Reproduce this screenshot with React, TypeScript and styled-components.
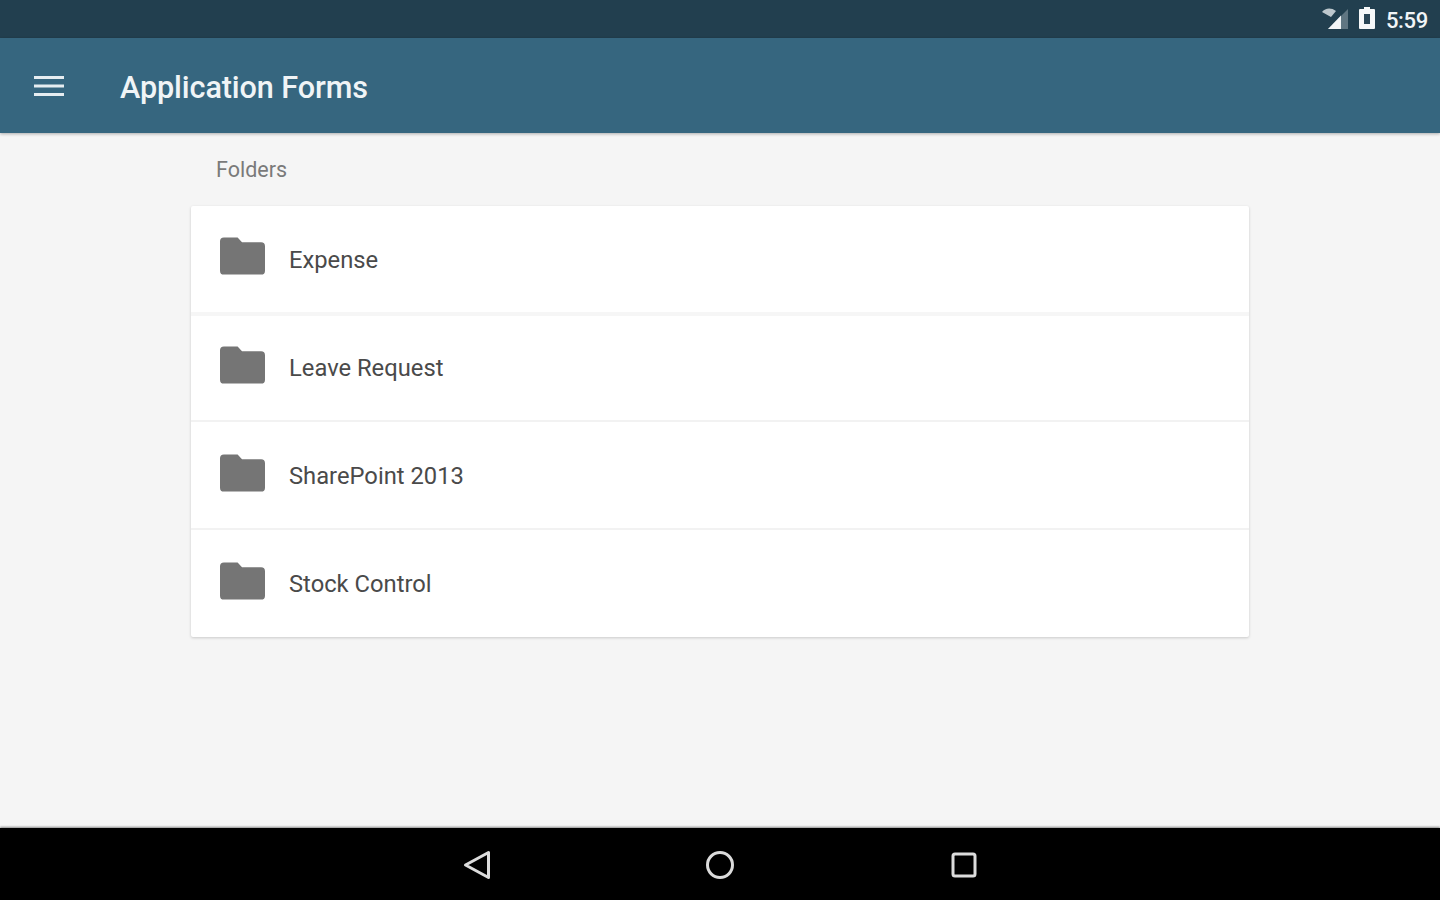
import React from "react";
import styled, { createGlobalStyle } from "styled-components";

const GlobalStyle = createGlobalStyle`
  html, body {
    margin: 0;
    padding: 0;
    height: 100%;
    background: #f5f5f5;
    font-family: Roboto, "Liberation Sans", sans-serif;
  }
`;

const Screen = styled.div`
  width: 1440px;
  height: 900px;
  display: flex;
  flex-direction: column;
  overflow: hidden;
`;

const StatusBar = styled.div`
  height: 38px;
  flex: none;
  background: #223f4f;
  display: flex;
  align-items: center;
  justify-content: flex-end;
  padding-right: 12px;
  box-sizing: border-box;
  color: #f2f5f7;
`;

const StatusIcon = styled.svg<{ $gap: number }>`
  display: block;
  margin-right: ${(props) => props.$gap}px;
`;

const Clock = styled.span`
  font-size: 22px;
  font-weight: 500;
  letter-spacing: -0.3px;
  padding-top: 2px;
`;

const Toolbar = styled.header`
  height: 95px;
  flex: none;
  background: #36667f;
  display: flex;
  align-items: center;
  padding-left: 34px;
  box-sizing: border-box;
  position: relative;
  z-index: 1;
  box-shadow: 0 1px 3px rgba(0, 0, 0, 0.3);
`;

const MenuIcon = styled.svg`
  display: block;
  margin-right: 56px;
`;

const Title = styled.h1`
  margin: 0 0 -3px;
  color: #f0f4f6;
  font-size: 30.6px;
  font-weight: 500;
  letter-spacing: -0.1px;
`;

const Content = styled.main`
  flex: 1;
  background: #f5f5f5;
  padding: 0 191px;
`;

const SectionLabel = styled.div`
  height: 73px;
  box-sizing: border-box;
  padding: 24px 0 0 25px;
  color: #7a7a7a;
  font-size: 21.5px;
  line-height: 25px;
`;

const Card = styled.section`
  width: 1058px;
  background: #fff;
  box-shadow: 0 1px 3px rgba(0, 0, 0, 0.18);
  border-radius: 2px;
`;

const Row = styled.div`
  height: 108px;
  box-sizing: border-box;
  display: flex;
  align-items: flex-start;
  padding: 32px 0 0 29px;
  border-bottom: 2px solid #f2f2f2;

  &:first-child {
    border-bottom-color: #f6f6f6;
  }

  &:first-child svg {
    margin-top: -1px;
  }

  &:nth-child(2) {
    padding-top: 30px;
    border-top: 2px solid #f6f6f6;
  }

  &:last-child {
    height: 107px;
    border-bottom: none;
  }
`;

const FolderIcon = styled.svg`
  display: block;
  margin: 0 24px 0 0;
`;

const RowLabel = styled.span`
  color: #4a4a4a;
  font-size: 23.75px;
  line-height: 28px;
  margin-top: 8px;
`;

const NavBar = styled.nav`
  height: 72px;
  flex: none;
  background: #000;
  display: flex;
  align-items: center;
  justify-content: center;
  gap: 199px;
  box-shadow: 0 -1px 2px rgba(0, 0, 0, 0.45);
  position: relative;
`;

const NavIcon = styled.svg`
  display: block;
  color: #dcdcdc;
  margin-top: 1px;
`;

const folders = ["Expense", "Leave Request", "SharePoint 2013", "Stock Control"];

const App: React.FC = () => {
  return (
    <Screen>
      <GlobalStyle />
      <StatusBar>
        <StatusIcon $gap={9} width="27" height="24" viewBox="0 0 27 24">
          <path d="M26 2v20H6z" fill="#f2f5f7" fillOpacity="0.3" />
          <path d="M19 8.500V22H6z" fill="#f2f5f7" />
          <path d="M0 5C3 1 9 0 14 4l-5 6C6 8 3 7 0 5z" fill="#f2f5f7" fillOpacity="0.75" />
        </StatusIcon>
        <StatusIcon $gap={10} width="18" height="24" viewBox="0 0 18 24">
          <path d="M6 0h6v2h4a1 1 0 0 1 1 1v18a1 1 0 0 1-1 1H2a1 1 0 0 1-1-1V3a1 1 0 0 1 1-1h4z" fill="#f6f8f9" />
          <path d="M6 7h6v10H6z" fill="#2a4656" />
        </StatusIcon>
        <Clock>5:59</Clock>
      </StatusBar>
      <Toolbar>
        <MenuIcon width="30" height="22" viewBox="0 0 30 22">
          <path d="M0 2.500h30M0 11h30M0 19.500h30" stroke="#e6edf1" strokeWidth="3" />
        </MenuIcon>
        <Title>Application Forms</Title>
      </Toolbar>
      <Content>
        <SectionLabel>Folders</SectionLabel>
        <Card>
          {folders.map((name) => (
            <Row key={name}>
              <FolderIcon width="45" height="38" viewBox="0 0 46 38">
                <path
                  d="M4 0h14l4.500 5H42a4 4 0 0 1 4 4v25a4 4 0 0 1-4 4H4a4 4 0 0 1-4-4V4a4 4 0 0 1 4-4z"
                  fill="#757575"
                />
              </FolderIcon>
              <RowLabel>{name}</RowLabel>
            </Row>
          ))}
        </Card>
      </Content>
      <NavBar>
        <NavIcon width="44" height="32" viewBox="0 0 44 32">
          <path
            d="M33.500 3.500v25L10.500 16z"
            fill="none"
            stroke="currentColor"
            strokeWidth="3"
            strokeLinejoin="round"
          />
        </NavIcon>
        <NavIcon width="44" height="32" viewBox="0 0 44 32">
          <circle cx="22" cy="16" r="12.500" fill="none" stroke="currentColor" strokeWidth="3" />
        </NavIcon>
        <NavIcon width="44" height="32" viewBox="0 0 44 32">
          <rect x="12" y="5" width="22" height="22" rx="2" fill="none" stroke="currentColor" strokeWidth="3" />
        </NavIcon>
      </NavBar>
    </Screen>
  );
};

export default App;
